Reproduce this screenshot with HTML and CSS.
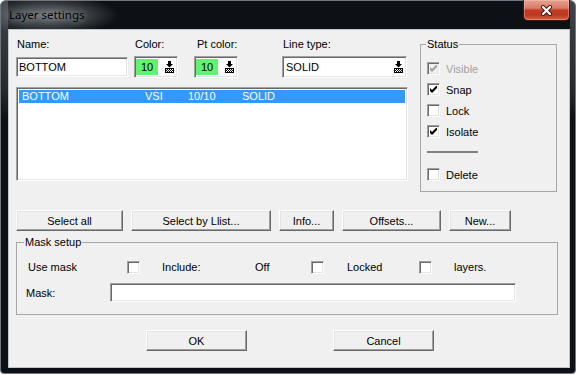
FILE: index.html
```html
<!DOCTYPE html>
<html lang="en">
<head>
    <meta charset="UTF-8">
    <title>Layer settings</title>
    <link rel="stylesheet" href="styles.css">
</head>
<body>
    <!-- shared icon for the little drop buttons -->
    <svg class="defs" width="0" height="0">
        <defs>
            <pattern id="dots" width="2" height="2" patternUnits="userSpaceOnUse">
                <rect width="1" height="1" fill="#000"/>
                <rect x="1" y="1" width="1" height="1" fill="#000"/>
            </pattern>
            <symbol id="drop-icon" viewBox="0 0 9 12">
                <rect x="3" y="0" width="3" height="3" fill="#000"/>
                <polygon points="1,3 8,3 4.5,6.5" fill="#000"/>
                <rect x="0.5" y="7.5" width="8" height="4" fill="url(#dots)" stroke="#000"/>
            </symbol>
            <symbol id="tick" viewBox="0 0 7 7">
                <polygon points="0,2 2,4 6,0 7,0 7,2 2,7 0,5" />
            </symbol>
        </defs>
    </svg>

    <div class="window">
        <div class="titlebar">
            <span class="title">Layer settings</span>
            <button class="close" aria-label="Close">
                <svg width="13" height="11" viewBox="0 0 13 11">
                    <path d="M3 2 L10 9 M10 2 L3 9" stroke="#3a1510" stroke-width="4" stroke-linecap="round"/>
                    <path d="M3 2 L10 9 M10 2 L3 9" stroke="#fff" stroke-width="2.2" stroke-linecap="round"/>
                </svg>
            </button>
        </div>

        <div class="client">
            <div class="top">
                <div class="layer-col">
                    <div class="fields">
                        <div class="field f-name">
                            <label>Name:</label>
                            <div class="ctl"><div class="edit sunken">BOTTOM</div></div>
                        </div>
                        <div class="field f-color">
                            <label>Color:</label>
                            <div class="ctl">
                                <div class="combo sunken">
                                    <span class="swatch">10</span>
                                    <span class="drop"><svg width="9" height="12"><use href="#drop-icon"/></svg></span>
                                </div>
                            </div>
                        </div>
                        <div class="field f-pt">
                            <label>Pt color:</label>
                            <div class="ctl">
                                <div class="combo sunken">
                                    <span class="swatch">10</span>
                                    <span class="drop"><svg width="9" height="12"><use href="#drop-icon"/></svg></span>
                                </div>
                            </div>
                        </div>
                        <div class="field f-line">
                            <label>Line type:</label>
                            <div class="ctl">
                                <div class="combo sunken">
                                    <span class="value">SOLID</span>
                                    <span class="drop"><svg width="9" height="12"><use href="#drop-icon"/></svg></span>
                                </div>
                            </div>
                        </div>
                    </div>

                    <div class="listbox sunken">
                        <div class="row selected">
                            <span class="c-name">BOTTOM</span>
                            <span class="c-flags">VSI</span>
                            <span class="c-colors">10/10</span>
                            <span>SOLID</span>
                        </div>
                    </div>
                </div>

                <fieldset class="group status">
                    <legend>Status</legend>
                    <div class="check-row disabled">
                        <span class="check"><svg width="7" height="7"><use href="#tick"/></svg></span>Visible
                    </div>
                    <div class="check-row">
                        <span class="check"><svg width="7" height="7"><use href="#tick"/></svg></span>Snap
                    </div>
                    <div class="check-row">
                        <span class="check"></span>Lock
                    </div>
                    <div class="check-row">
                        <span class="check"><svg width="7" height="7"><use href="#tick"/></svg></span>Isolate
                    </div>
                    <hr class="sep">
                    <div class="check-row delete">
                        <span class="check"></span>Delete
                    </div>
                </fieldset>
            </div>

            <div class="actions">
                <button class="btn b-all">Select all</button>
                <button class="btn b-list">Select by Llist...</button>
                <button class="btn b-info">Info...</button>
                <button class="btn b-off">Offsets...</button>
                <button class="btn b-new">New...</button>
            </div>

            <fieldset class="group mask">
                <legend>Mask setup</legend>
                <div class="mask-opts">
                    <span>Use mask</span>
                    <span><span class="check"></span></span>
                    <span>Include:</span>
                    <span>Off</span>
                    <span><span class="check"></span></span>
                    <span>Locked</span>
                    <span><span class="check"></span></span>
                    <span>layers.</span>
                </div>
                <div class="mask-row">
                    <label>Mask:</label>
                    <div class="edit sunken mask-edit"></div>
                </div>
            </fieldset>

            <div class="footer">
                <button class="btn">OK</button>
                <button class="btn">Cancel</button>
            </div>
        </div>
    </div>
</body>
</html>
```

FILE: styles.css
```css
/* Base */
* {
    box-sizing: border-box;
}
body {
    margin: 0;
    background: #fff;
    font-family: "Liberation Sans", Arial, sans-serif;
    font-size: 11px;
    color: #000;
}
.defs {
    position: absolute;
    width: 0;
    height: 0;
    overflow: hidden;
}

/* Window frame (dark glass) */
.window {
    width: 576px;
    height: 374px;
    border: 1px solid #6f787f;
    border-radius: 6px 6px 4px 4px;
    background:
        linear-gradient(to bottom, rgba(125, 130, 136, 0.45), rgba(110, 115, 120, 0.25) 90px, rgba(0, 0, 0, 0) 118px) left top / 7px 100% no-repeat,
        linear-gradient(to bottom, rgba(125, 130, 136, 0.45), rgba(110, 115, 120, 0.25) 90px, rgba(0, 0, 0, 0) 118px) right top / 5px 100% no-repeat,
        radial-gradient(ellipse 72px 20px at 46px 14px, rgba(140, 145, 150, 0.8), rgba(140, 145, 150, 0) 100%),
        #0d1116;
    display: flex;
    flex-direction: column;
}
.titlebar {
    height: 28px;
    display: flex;
    align-items: flex-start;
    padding-left: 8px;
}
.title {
    font-family: "Noto Sans", "Open Sans", sans-serif;
    font-size: 11.5px;
    line-height: 14px;
    margin-top: 7px;
    color: #000;
    text-shadow: 0 0 7px rgba(210, 212, 215, 0.7);
}
.close {
    margin: -1px 5px 0 auto;
    width: 47px;
    height: 21px;
    padding: 0;
    border: 1px solid #47170f;
    border-top: none;
    border-radius: 0 0 5px 5px;
    background: linear-gradient(to bottom, #e7a392 0%, #d97c68 40%, #c23a20 52%, #b93a24 75%, #d9603f 100%);
    box-shadow: inset 0 0 0 1px rgba(255, 210, 200, 0.35);
    display: flex;
    align-items: center;
    justify-content: center;
}

/* Client area */
.client {
    margin: 0 5px 0 7px;
    height: 339px;
    border: 1px solid #bfc6cc;
    background: #f0f0f0;
    padding: 8px 0 0 7px;
}

/* 3D borders */
.sunken {
    border: 1px solid;
    border-color: #a0a0a0 #fff #fff #a0a0a0;
    box-shadow: inset 1px 1px 0 #696969, inset -1px -1px 0 #e3e3e3;
    background: #fff;
}
.btn {
    height: 21px;
    padding: 0;
    font: inherit;
    color: #000;
    background: #f0f0f0;
    border: 1px solid;
    border-color: #fff #696969 #696969 #fff;
    box-shadow: inset -1px -1px 0 #a0a0a0, inset 1px 1px 0 #e3e3e3;
}

/* Top section */
.top {
    display: flex;
    align-items: flex-start;
    gap: 12px;
}
.layer-col {
    width: 392px;
}
.fields {
    display: flex;
}
.field {
    display: flex;
    flex-direction: column;
    gap: 5px;
}
.field label {
    line-height: 13px;
    padding-left: 1px;
}
.ctl {
    height: 22px;
    display: flex;
    align-items: center;
}
.f-name { width: 112px; }
.f-color { width: 44px; margin-left: 6px; }
.f-pt { width: 44px; margin-left: 16px; }
.f-pt label { padding-left: 3px; }
.f-line { width: 125px; margin-left: 44px; }

.edit {
    width: 100%;
    height: 20px;
    line-height: 16px;
    padding: 1px 2px;
}
.combo {
    width: 100%;
    height: 22px;
    display: flex;
    align-items: center;
    padding: 1px;
}
.swatch {
    width: 22px;
    height: 16px;
    margin-right: 2px;
    background: #63f170;
    text-align: center;
    line-height: 16px;
}
.value {
    flex: 1;
    padding-left: 2px;
}
.drop {
    width: 14px;
    height: 18px;
    margin-left: auto;
    display: flex;
    align-items: center;
    justify-content: center;
    background: #fff;
}
.drop svg {
    display: block;
}

.listbox {
    margin-top: 9px;
    height: 94px;
    padding: 2px 2px 0;
}
.row {
    display: flex;
    height: 13px;
    line-height: 13px;
    padding-left: 3px;
}
.row.selected {
    background: #3399ff;
    color: #fff;
}
.c-name { width: 123px; }
.c-flags { width: 43px; }
.c-colors { width: 54px; }

/* Group boxes */
.group {
    margin: 0;
    min-width: 0;
    border: 1px solid #a6a6a6;
}
.group legend {
    padding: 0 1px;
    line-height: 13px;
}
.status {
    width: 137px;
    padding: 11px 6px 10px 6px;
}
.status legend {
    margin-left: -1px;
}
.check-row {
    display: flex;
    align-items: center;
    height: 13px;
    gap: 6px;
}
.check-row + .check-row {
    margin-top: 8px;
}
.check {
    width: 13px;
    height: 13px;
    flex: none;
    display: flex;
    align-items: center;
    justify-content: center;
    border: 1px solid;
    border-color: #a0a0a0 #fff #fff #a0a0a0;
    box-shadow: inset 1px 1px 0 #696969, inset -1px -1px 0 #e3e3e3;
    background: #fff;
}
.check svg {
    display: block;
    fill: #000;
}
.disabled {
    color: #a0a0a0;
}
.disabled .check {
    background: #f0f0f0;
}
.disabled .check svg {
    fill: #a0a0a0;
}
.sep {
    margin: 13px 0 0;
    width: 51px;
    height: 2px;
    border: none;
    background: #808080;
}
.check-row.delete {
    margin-top: 15px;
}

/* Button row */
.actions {
    display: flex;
    gap: 8px;
    margin-top: 18px;
}
.b-all { width: 107px; }
.b-list { width: 140px; }
.b-info { width: 55px; }
.b-off { width: 99px; }
.b-new { width: 62px; }

/* Mask setup */
.mask {
    width: 542px;
    margin-top: 5px;
    padding: 12px 9px 12px 9px;
}
.mask legend {
    margin-left: -2px;
}
.mask-opts {
    display: grid;
    grid-template-columns: 99px 35px 93px 56px 36px 72px 35px auto;
    align-items: center;
    height: 13px;
    padding-left: 2px;
}
.mask-opts > span {
    line-height: 13px;
}
.mask-row {
    display: flex;
    align-items: center;
    margin-top: 9px;
}
.mask-row label {
    width: 84px;
}
.mask-edit {
    width: 406px;
    height: 19px;
}

/* OK / Cancel */
.footer {
    display: flex;
    gap: 86px;
    margin: 15px 0 0 130px;
}
.footer .btn {
    width: 101px;
}
```
